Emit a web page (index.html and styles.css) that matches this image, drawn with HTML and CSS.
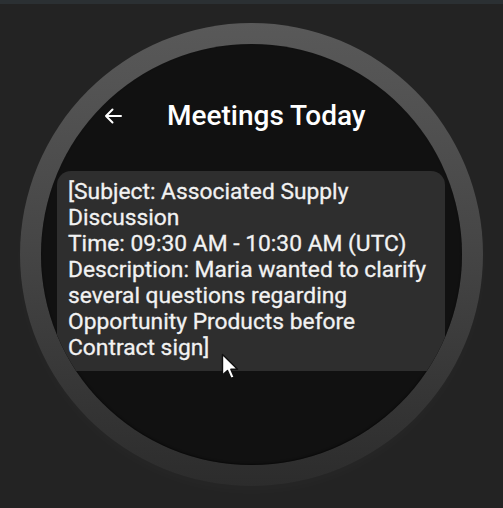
FILE: index.html
```html
<!DOCTYPE html>
<html>
<head>
<meta charset="utf-8">
<link rel="stylesheet" href="styles.css">
</head>
<body>
<div class="topbar"></div>
<div class="stage">
  <div class="ring">
    <div class="face">
      <div class="header">
        <svg class="back" width="20" height="20" viewBox="0 0 20 20">
          <path d="M18 10H3M9.5 3.5L3 10l6.5 6.5" fill="none" stroke="#fff" stroke-width="2" stroke-linecap="round" stroke-linejoin="round"/>
        </svg>
        <div class="title">Meetings Today</div>
      </div>
      <div class="card">
        <p class="text">[Subject: Associated Supply Discussion<br>Time: 09:30 AM - 10:30 AM (UTC)<br>Description: Maria wanted to clarify several questions regarding Opportunity Products before Contract sign]</p>
      </div>
    </div>
  </div>
  <svg class="cursor" width="20" height="28" viewBox="0 0 20 28">
    <path d="M1.5 1.5V22l5-4.5 3.5 8 3.2-1.4-3.4-7.8H16.5Z" fill="#fff" stroke="#111" stroke-width="1.4" stroke-linejoin="round"/>
  </svg>
</div>
</body>
</html>
```
FILE: styles.css
```css
html, body {
  margin: 0;
  padding: 0;
  background: #232323;
  width: 503px;
  height: 508px;
  overflow: hidden;
}
.topbar {
  height: 4px;
  background: #2b3033;
}
.stage {
  position: relative;
  padding: 19px 0 0 20px;
}
.ring {
  width: 421px;
  height: 421px;
  padding: 21px;
  border-radius: 50%;
  background: linear-gradient(to bottom, #595959 0%, #474747 45%, #2c2c2c 100%);
  box-shadow: 0 6px 14px rgba(255,255,255,0.02);
}
.face {
  width: 421px;
  height: 421px;
  border-radius: 50%;
  background: #111111;
  overflow: hidden;
  display: flex;
  flex-direction: column;
  box-shadow: 0 -1px 2px rgba(0,0,0,0.5) inset;
}
.header {
  display: flex;
  align-items: center;
  margin-top: 56px;
  padding-left: 62px;
  height: 32px;
  gap: 44px;
}
.back {
  flex: none;
}
.title {
  font-family: Roboto, "Liberation Sans", sans-serif;
  font-weight: 500;
  font-size: 28px;
  line-height: 32px;
  color: #ffffff;
  white-space: nowrap;
}
.card {
  margin: 39px 17px 0 16px;
  background: #2e2e2e;
  border-radius: 14px;
  padding: 8px 8px 10px 11px;
}
.text {
  margin: 0;
  font-family: Roboto, "Liberation Sans", sans-serif;
  font-size: 22.8px;
  line-height: 26px;
  color: #f2f2f2;
  -webkit-text-stroke: 0.3px #f2f2f2;
}
.cursor {
  position: absolute;
  left: 221px;
  top: 349px;
}
```
